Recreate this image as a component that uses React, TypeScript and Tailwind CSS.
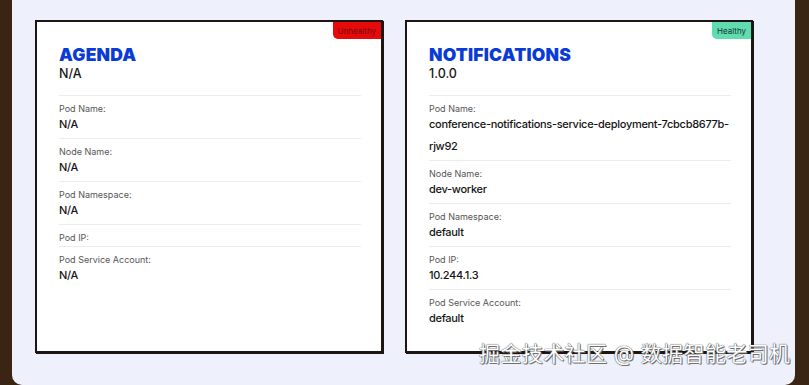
import React from 'react'

type Field = { label: string; value: string }

type Service = {
  name: string
  version: string
  healthy: boolean
  fields: Field[]
}

const SERVICES: Service[] = [
  {
    name: 'AGENDA',
    version: 'N/A',
    healthy: false,
    fields: [
      { label: 'Pod Name:', value: 'N/A' },
      { label: 'Node Name:', value: 'N/A' },
      { label: 'Pod Namespace:', value: 'N/A' },
      { label: 'Pod IP:', value: '' },
      { label: 'Pod Service Account:', value: 'N/A' },
    ],
  },
  {
    name: 'NOTIFICATIONS',
    version: '1.0.0',
    healthy: true,
    fields: [
      { label: 'Pod Name:', value: 'conference-notifications-service-deployment-7cbcb8677b-rjw92' },
      { label: 'Node Name:', value: 'dev-worker' },
      { label: 'Pod Namespace:', value: 'default' },
      { label: 'Pod IP:', value: '10.244.1.3' },
      { label: 'Pod Service Account:', value: 'default' },
    ],
  },
]

function ServiceCard({ service }: { service: Service }) {
  return (
    <div className="relative w-[348px] h-[333px] shrink-0 bg-white border-2 border-[#1d1511] shadow-[1px_1px_0_#1d1511]">
      {/* Status badge */}
      <span
        className={`absolute top-0 right-0 h-[17px] flex items-center px-[5px] rounded-bl-[5px] text-[8px] leading-none ${
          service.healthy ? 'bg-[#5fdcb0] text-[#17332a]' : 'bg-[#e60a0a] text-[#7a0a0a]'
        }`}
      >
        {service.healthy ? 'Healthy' : 'Unhealthy'}
      </span>

      <div className="pl-[22px] pr-[20px] pt-[22px]">
        <h2 className="text-[17.5px] leading-[22px] font-black tracking-[0.2px] text-[#0b3bd6]">
          {service.name}
        </h2>
        <p className="text-[12.5px] leading-[15px] font-medium text-[#161616]">{service.version}</p>

        <div className="mt-[14px] border-t border-[#ececec]">
          {service.fields.map((f, i) => (
            <div
              key={f.label}
              className={`pt-[9px] ${f.value ? 'pb-[3px]' : 'pb-[4px]'} ${
                i < service.fields.length - 1 ? 'border-b border-[#ececec]' : ''
              }`}
            >
              <div className="text-[9px] leading-[8px] text-[#555]">{f.label}</div>
              {f.value && (
                <div className="text-[11px] leading-[22px] font-medium tracking-[-0.3px] text-[#141414]">
                  {f.value}
                </div>
              )}
            </div>
          ))}
        </div>
      </div>
    </div>
  )
}

export default function App() {
  return (
    <div
      className="relative w-[809px] h-[385px] flex bg-[#3a2413] pl-[12px] pr-[14px] overflow-hidden"
      style={{ fontFamily: 'Inter, "Noto Sans CJK SC", sans-serif' }}
    >
      <div className="flex-1 h-full bg-[#eef0fb] rounded-b-[10px] pt-[20px] pl-[23px] flex gap-[22px]">
        {SERVICES.map((s) => (
          <ServiceCard key={s.name} service={s} />
        ))}
      </div>

      {/* watermark */}
      <span className="absolute left-[479px] top-[341px] text-[21px] leading-[26px] text-white tracking-[0.4px] [text-shadow:0_0_1px_#555,0_0_1px_#555,1px_1px_0_#777]">
        掘金技术社区 @ 数据智能老司机
      </span>
    </div>
  )
}
